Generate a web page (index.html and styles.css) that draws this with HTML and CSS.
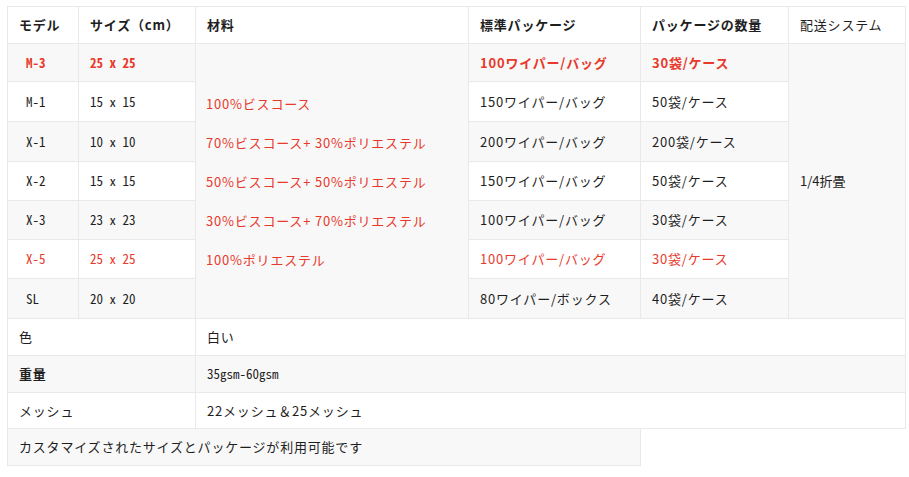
FILE: index.html
```html
<!DOCTYPE html>
<html lang="ja">
<head>
<meta charset="utf-8">
<title>仕様表</title>
<link rel="stylesheet" href="styles.css">
</head>
<body>
<table class="spec">
  <colgroup>
    <col class="c1"><col class="c2"><col class="c3"><col class="c4"><col class="c5"><col class="c6">
  </colgroup>
  <tbody>
    <tr class="r-head">
      <th>モデル</th>
      <th>サイズ（cm）</th>
      <th>材料</th>
      <th>標準パッケージ</th>
      <th>パッケージの数量</th>
      <th class="plain">配送システム</th>
    </tr>
    <tr class="r-body hot">
      <td class="model mono">M-3</td>
      <td class="mono">25 x 25</td>
      <td class="material" rowspan="7">
        <div class="mat-line">100%ビスコース</div>
        <div class="mat-line">70%ビスコース+ 30%ポリエステル</div>
        <div class="mat-line">50%ビスコース+ 50%ポリエステル</div>
        <div class="mat-line">30%ビスコース+ 70%ポリエステル</div>
        <div class="mat-line">100%ポリエステル</div>
      </td>
      <td>100ワイパー/バッグ</td>
      <td>30袋/ケース</td>
      <td class="ship" rowspan="7">1/4折畳</td>
    </tr>
    <tr class="r-body tall">
      <td class="model mono">M-1</td>
      <td class="mono">15 x 15</td>
      <td>150ワイパー/バッグ</td>
      <td>50袋/ケース</td>
    </tr>
    <tr class="r-body tall">
      <td class="model mono">X-1</td>
      <td class="mono">10 x 10</td>
      <td>200ワイパー/バッグ</td>
      <td>200袋/ケース</td>
    </tr>
    <tr class="r-body">
      <td class="model mono">X-2</td>
      <td class="mono">15 x 15</td>
      <td>150ワイパー/バッグ</td>
      <td>50袋/ケース</td>
    </tr>
    <tr class="r-body">
      <td class="model mono">X-3</td>
      <td class="mono">23 x 23</td>
      <td>100ワイパー/バッグ</td>
      <td>30袋/ケース</td>
    </tr>
    <tr class="r-body red">
      <td class="model mono">X-5</td>
      <td class="mono">25 x 25</td>
      <td>100ワイパー/バッグ</td>
      <td>30袋/ケース</td>
    </tr>
    <tr class="r-body tall">
      <td class="model mono">SL</td>
      <td class="mono">20 x 20</td>
      <td>80ワイパー/ボックス</td>
      <td>40袋/ケース</td>
    </tr>
    <tr class="r-info">
      <td colspan="2">色</td>
      <td colspan="4">白い</td>
    </tr>
    <tr class="r-info">
      <td colspan="2" class="strong">重量</td>
      <td colspan="4" class="mono">35gsm-60gsm</td>
    </tr>
    <tr class="r-info short">
      <td colspan="2">メッシュ</td>
      <td colspan="4">22メッシュ＆25メッシュ</td>
    </tr>
    <tr class="r-info">
      <td colspan="4">カスタマイズされたサイズとパッケージが利用可能です</td>
    </tr>
  </tbody>
</table>
</body>
</html>
```

FILE: styles.css
```css
html, body {
  background: #ffffff;
}

body {
  margin: 6px 0 0 7px;
  font-family: "Noto Sans CJK JP", "Noto Sans", sans-serif;
  font-size: 13px;
  color: #1e1e1e;
  letter-spacing: 0.8px;
}

.spec {
  width: 898px;
  table-layout: fixed;
  border-collapse: collapse;
}

.c1 { width: 71px; }
.c2 { width: 117px; }
.c3 { width: 273px; }
.c4 { width: 172px; }
.c5 { width: 148px; }
.c6 { width: 117px; }

.spec th,
.spec td {
  border: 1px solid #e9e9e9;
  padding: 0 10px 0 11px;
  text-align: left;
  vertical-align: middle;
  white-space: nowrap;
  line-height: 18px;
}

.spec th {
  font-weight: 700;
}

.spec th.plain {
  font-weight: 400;
}

.spec tr:nth-child(even) > td {
  background: #f8f8f8;
}

.r-head { height: 37px; }
.r-body { height: 39px; }
.r-body.hot { height: 38px; }
.r-body.tall { height: 40px; }
.r-info { height: 37px; }
.r-info.short { height: 36px; }

.mono {
  font-family: "Noto Sans Mono CJK JP", "DejaVu Sans Mono", monospace;
  font-size: 13px;
  letter-spacing: 0;
}

.spec td.model {
  padding-left: 18px;
}

.hot td {
  color: #e8392b;
  font-weight: 700;
}

.red td {
  color: #e8392b;
}

.spec td.material {
  color: #e8392b;
  font-weight: 400;
  padding-left: 10px;
}

.mat-line {
  height: 39px;
  line-height: 39px;
}

.spec td.ship {
  color: #1e1e1e;
  font-weight: 400;
  letter-spacing: 0;
}

.strong {
  font-weight: 700;
}
```
